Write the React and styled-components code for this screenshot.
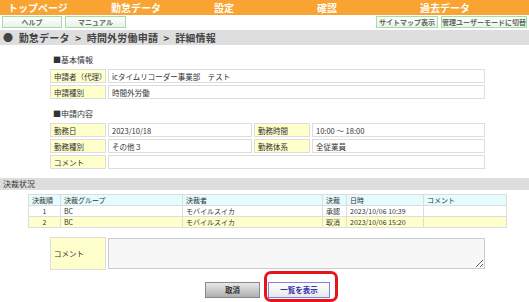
import React from 'react'
import styled, { createGlobalStyle } from 'styled-components'

const Global = createGlobalStyle`
  html, body {
    margin: 0;
    padding: 0;
    background: #fff;
    font-family: "Noto Sans CJK JP", "Liberation Sans", sans-serif;
    color: #333;
  }
`
const Page = styled.div`
  width: 529px;
  height: 302px;
  overflow: hidden;
  position: relative;
`
const Nav = styled.div`
  display: flex;
  height: 15px;
  background: #f8a332;
`
const NavItem = styled.div`
  width: 103px;
  padding-left: 8px;
  box-sizing: border-box;
  font-size: 10px;
  font-weight: bold;
  line-height: 15px;
  color: #fff;
  white-space: nowrap;
`
const ToolRow = styled.div`
  display: flex;
  justify-content: space-between;
  padding: 1px 2px 0 2px;
  height: 13px;
`
const ToolGroup = styled.div`
  display: flex;
  gap: 3px;
`
const ToolButton = styled.div`
  width: ${p => p.w}px;
  height: 12px;
  box-sizing: border-box;
  border: 1px solid #9fe29f;
  background: linear-gradient(#ffffff, #eeeeee);
  font-size: 7px;
  font-weight: bold;
  color: #5a6e5a;
  line-height: 10px;
  text-align: center;
  white-space: nowrap;
`
const Crumb = styled.div`
  margin-top: 1px;
  height: 15px;
  background: #dedede;
  padding-left: 3px;
  font-size: 10px;
  font-weight: bold;
  line-height: 15px;
  color: #444;
  white-space: nowrap;
  word-spacing: 3px;
  letter-spacing: 0.2px;
`
const SectionTitle = styled.div`
  margin: ${p => p.top}px 0 0 53px;
  font-size: 8px;
  line-height: 10px;
  color: #333;
`
const Grid = styled.table`
  margin: ${p => p.top}px 0 0 ${p => p.left}px;
  width: ${p => p.w}px;
  border-collapse: separate;
  border-spacing: 2px;
  table-layout: fixed;
  font-size: 7.5px;
  td {
    border: 1px solid #dddddd;
    height: ${p => p.rowH || 12}px;
    padding: 0 0 0 3px;
    white-space: nowrap;
    overflow: hidden;
  }
`
const Label = styled.td`
  background: #ffffcc;
`
const Bar = styled.div`
  margin-top: ${p => p.top}px;
  height: 12px;
  background: #dddddd;
  padding-left: 3px;
  font-size: 8px;
  line-height: 12px;
  color: #333;
`
const Approval = styled.table`
  margin: 4px 0 0 28px;
  width: 479px;
  border-collapse: separate;
  border-spacing: 1px;
  background: #dddddd;
  table-layout: fixed;
  font-size: 7px;
  td, th {
    height: 10px;
    padding: 0 0 0 3px;
    font-weight: normal;
    text-align: left;
    white-space: nowrap;
  }
  th {
    background: #e4fcfc;
  }
`
const ARow = styled.tr`
  td {
    background: ${p => (p.alt ? '#ffffcc' : '#fff')};
  }
`
const Center = styled.td`
  && {
    text-align: center;
    padding: 0;
  }
`
const CommentBox = styled.textarea`
  display: block;
  width: 100%;
  height: 31px;
  box-sizing: border-box;
  border: 1px solid #cccccc;
  background: #f7f7f7;
  resize: both;
  margin: 0;
`
const Buttons = styled.div`
  display: flex;
  gap: 8px;
  margin: 10px 0 0 205px;
`
const Btn = styled.div`
  width: ${p => p.w}px;
  height: 16px;
  box-sizing: border-box;
  font-size: 7.5px;
  font-weight: bold;
  line-height: 14px;
  text-align: center;
  border: 1px solid ${p => (p.primary ? '#8080e0' : '#888')};
  color: ${p => (p.primary ? '#3333aa' : '#333')};
  background: ${p => (p.primary ? 'linear-gradient(#ffffff, #e8e8e8)' : 'linear-gradient(#e8e8e8, #b0b0b0)')};
  position: relative;
`
const Highlight = styled.div`
  position: absolute;
  left: -5px;
  top: -12px;
  width: 74px;
  height: 31px;
  box-sizing: border-box;
  border: 3px solid #e8141c;
  border-radius: 7px;
`

export default function App() {
  return (
    <Page>
      <Global />
      <Nav>
        <NavItem>トップページ</NavItem>
        <NavItem>勤怠データ</NavItem>
        <NavItem>設定</NavItem>
        <NavItem>確認</NavItem>
        <NavItem>過去データ</NavItem>
      </Nav>
      <ToolRow>
        <ToolGroup>
          <ToolButton w={60}>ヘルプ</ToolButton>
          <ToolButton w={61}>マニュアル</ToolButton>
        </ToolGroup>
        <ToolGroup>
          <ToolButton w={62}>サイトマップ表示</ToolButton>
          <ToolButton w={86}>管理ユーザーモードに切替</ToolButton>
        </ToolGroup>
      </ToolRow>
      <Crumb>● 勤怠データ &gt; 時間外労働申請 &gt; 詳細情報</Crumb>

      <SectionTitle top={10}>■基本情報</SectionTitle>
      <Grid top={2} left={48} w={439}>
        <colgroup>
          <col style={{ width: 56 }} />
          <col />
        </colgroup>
        <tbody>
          <tr><Label>申請者（代理）</Label><td>icタイムリコーダー事業部　テスト</td></tr>
          <tr><Label>申請種別</Label><td>時間外労働</td></tr>
        </tbody>
      </Grid>

      <SectionTitle top={8}>■申請内容</SectionTitle>
      <Grid top={2} left={48} w={439}>
        <colgroup>
          <col style={{ width: 56 }} />
          <col style={{ width: 144 }} />
          <col style={{ width: 56 }} />
          <col />
        </colgroup>
        <tbody>
          <tr><Label>勤務日</Label><td>2023/10/18</td><Label>勤務時間</Label><td>10:00 ～ 18:00</td></tr>
          <tr><Label>勤務種別</Label><td>その他３</td><Label>勤務体系</Label><td>全従業員</td></tr>
          <tr><Label>コメント</Label><td colSpan={3}></td></tr>
        </tbody>
      </Grid>

      <Bar top={7}>決裁状況</Bar>
      <Approval>
        <colgroup>
          <col style={{ width: 31 }} />
          <col style={{ width: 121 }} />
          <col style={{ width: 139 }} />
          <col style={{ width: 23 }} />
          <col style={{ width: 76 }} />
          <col />
        </colgroup>
        <thead>
          <tr><th>決裁順</th><th>決裁グループ</th><th>決裁者</th><th>決裁</th><th>日時</th><th>コメント</th></tr>
        </thead>
        <tbody>
          <ARow><Center>1</Center><td>BC</td><td>モバイルスイカ</td><td>承認</td><td>2023/10/06 10:39</td><td></td></ARow>
          <ARow alt><Center>2</Center><td>BC</td><td>モバイルスイカ</td><td>取消</td><td>2023/10/06 15:20</td><td></td></ARow>
        </tbody>
      </Approval>

      <Grid top={7} left={48} w={439} rowH={31}>
        <colgroup>
          <col style={{ width: 56 }} />
          <col />
        </colgroup>
        <tbody>
          <tr><Label>コメント</Label><td style={{ padding: 0, border: 'none' }}><CommentBox /></td></tr>
        </tbody>
      </Grid>

      <Buttons>
        <Btn w={55}>取消</Btn>
        <Btn w={62} primary>一覧を表示<Highlight /></Btn>
      </Buttons>
    </Page>
  )
}
